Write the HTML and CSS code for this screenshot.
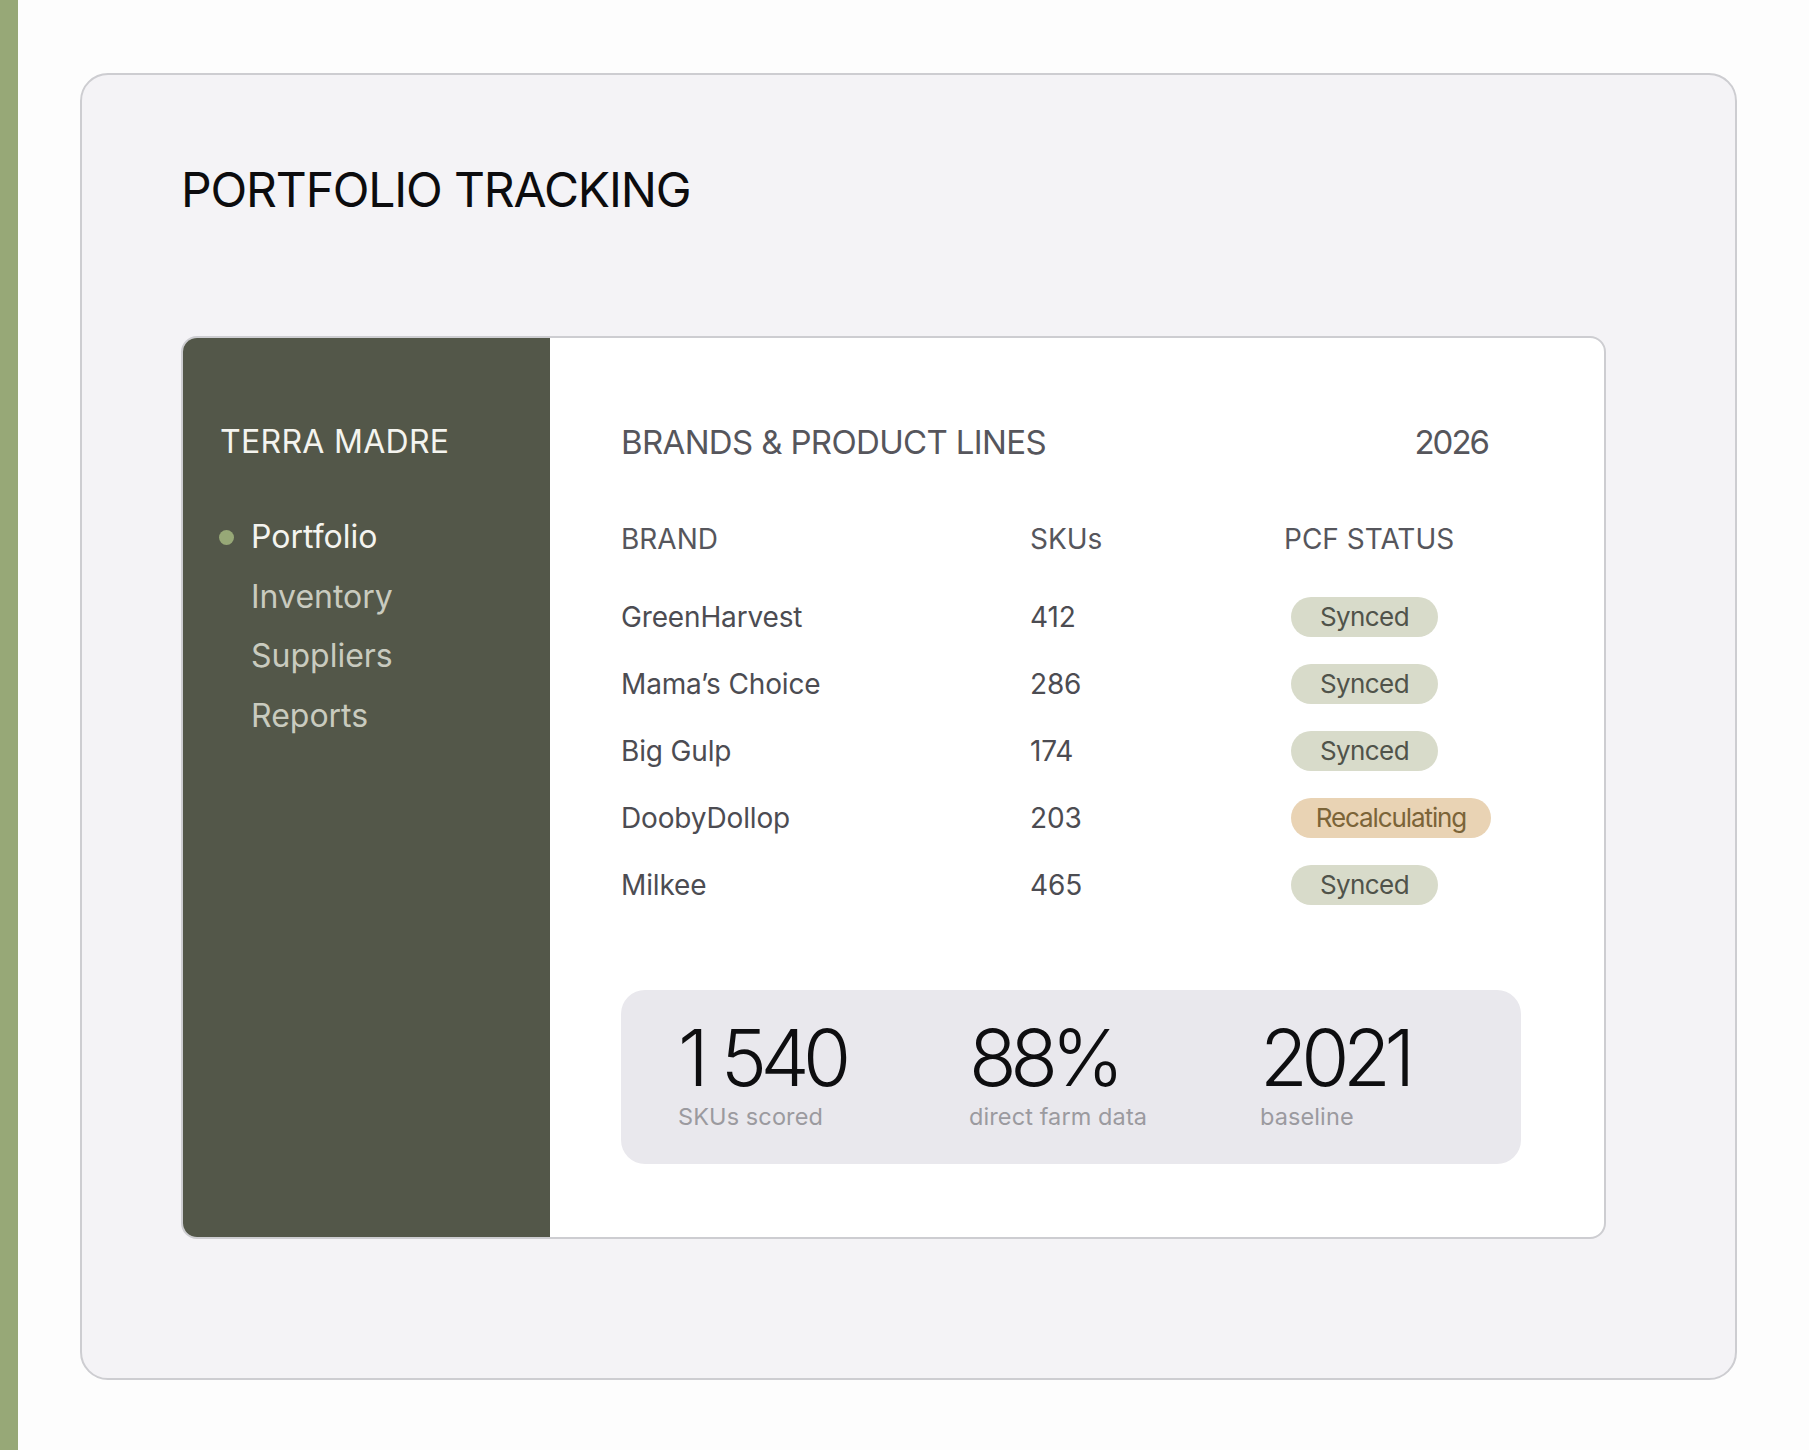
FILE: index.html
```html
<!DOCTYPE html>
<html lang="en">
<head>
<meta charset="utf-8">
<title>Portfolio Tracking</title>
<link rel="stylesheet" href="styles.css">
</head>
<body>
<div class="page">
  <div class="strip"></div>
  <main class="outer">
    <h1 class="title">PORTFOLIO TRACKING</h1>
    <section class="app">
      <aside class="sidebar">
        <div class="brand">TERRA MADRE</div>
        <nav class="nav">
          <div class="nav-item active"><span class="dot"></span>Portfolio</div>
          <div class="nav-item">Inventory</div>
          <div class="nav-item">Suppliers</div>
          <div class="nav-item">Reports</div>
        </nav>
      </aside>
      <div class="content">
        <div class="content-head">
          <div class="heading">BRANDS &amp; PRODUCT LINES</div>
          <div class="year">2026</div>
        </div>
        <div class="table">
          <div class="row head">
            <div>BRAND</div><div>SKUs</div><div>PCF STATUS</div>
          </div>
          <div class="row">
            <div>GreenHarvest</div><div>412</div><div><span class="badge synced">Synced</span></div>
          </div>
          <div class="row">
            <div>Mama’s Choice</div><div>286</div><div><span class="badge synced">Synced</span></div>
          </div>
          <div class="row">
            <div>Big Gulp</div><div>174</div><div><span class="badge synced">Synced</span></div>
          </div>
          <div class="row">
            <div>DoobyDollop</div><div>203</div><div><span class="badge recalc">Recalculating</span></div>
          </div>
          <div class="row">
            <div>Milkee</div><div>465</div><div><span class="badge synced">Synced</span></div>
          </div>
        </div>
        <div class="stats">
          <div class="stat">
            <div class="num">1 540</div>
            <div class="label">SKUs scored</div>
          </div>
          <div class="stat">
            <div class="num">88%</div>
            <div class="label">direct farm data</div>
          </div>
          <div class="stat">
            <div class="num">2021</div>
            <div class="label">baseline</div>
          </div>
        </div>
      </div>
    </section>
  </main>
</div>
</body>
</html>
```
FILE: styles.css
```css
* { box-sizing: border-box; }
html, body { margin: 0; padding: 0; }
body {
  background: #fdfdfd;
  font-family: Inter, "Noto Sans", "Liberation Sans", sans-serif;
  color: #111;
}
.page {
  display: flex;
  min-height: 1450px;
}
.strip {
  width: 18px;
  flex: none;
  background: #97a877;
}
.outer {
  margin: 73px 0 0 62px;
  width: 1657px;
  height: 1307px;
  background: #f4f3f6;
  border: 2px solid #cdcdd1;
  border-radius: 28px;
  padding: 85px 0 0 99px;
}
.title {
  margin: 0;
  font-size: 48px;
  line-height: 60px;
  font-weight: 400;
  letter-spacing: -1.15px;
  color: #0c0c0e;
}
.app {
  margin-top: 116px;
  width: 1425px;
  height: 903px;
  border: 2px solid #cdcdd1;
  border-radius: 16px;
  overflow: hidden;
  display: flex;
  background: #fff;
}
.sidebar {
  width: 367px;
  flex: none;
  background: #535749;
  padding: 84px 0 0 37px;
}
.brand {
  font-size: 32px;
  line-height: 40px;
  letter-spacing: 0.3px;
  color: #f4f4ef;
}
.nav {
  margin-top: 45px;
  display: flex;
  flex-direction: column;
}
.nav-item {
  position: relative;
  padding-left: 31px;
  font-size: 32px;
  line-height: 59.5px;
  letter-spacing: 0;
  color: #c9cbbf;
}
.nav-item.active { color: #f4f4ef; }
.dot {
  position: absolute;
  left: -1px;
  top: 23px;
  width: 15px;
  height: 15px;
  border-radius: 50%;
  background: #97a877;
}
.content {
  flex: 1;
  padding: 84px 0 0 71px;
}
.content-head {
  display: flex;
  justify-content: space-between;
  width: 867px;
  font-size: 33px;
  line-height: 40px;
  letter-spacing: -0.65px;
  color: #56565c;
}
.year { letter-spacing: -2px; }
.table {
  margin-top: 57px;
  width: 900px;
}
.row {
  display: grid;
  grid-template-columns: 409px 254px 1fr;
  align-items: center;
  height: 67px;
  font-size: 28px;
  letter-spacing: -0.15px;
  color: #4c4c52;
}
.row.head {
  height: 40px;
  margin-bottom: 24.5px;
  font-size: 28px;
  letter-spacing: 0;
  color: #56565c;
}
.badge {
  display: inline-block;
  margin-left: 7px;
  height: 40px;
  line-height: 40px;
  border-radius: 20px;
  font-size: 26px;
  letter-spacing: -0.6px;
  text-align: center;
}
.badge.synced {
  width: 147px;
  background: #d8dbca;
  color: #50534a;
}
.badge.recalc {
  width: 200px;
  background: #e9d3b4;
  color: #7b6438;
  letter-spacing: -1.1px;
}
.stats {
  margin-top: 71.5px;
  width: 900px;
  height: 174px;
  background: #e9e8ed;
  border-radius: 24px;
  padding: 28.5px 0 0 57px;
  display: grid;
  grid-template-columns: 291px 291px 1fr;
}
.num {
  font-size: 78px;
  line-height: 78px;
  font-weight: 300;
  letter-spacing: -6.5px;
  word-spacing: 3px;
  color: #0e0e10;
}
.label {
  margin-top: 5.5px;
  font-size: 23.5px;
  line-height: 30px;
  letter-spacing: 0.1px;
  color: #9b9a9f;
}
```
